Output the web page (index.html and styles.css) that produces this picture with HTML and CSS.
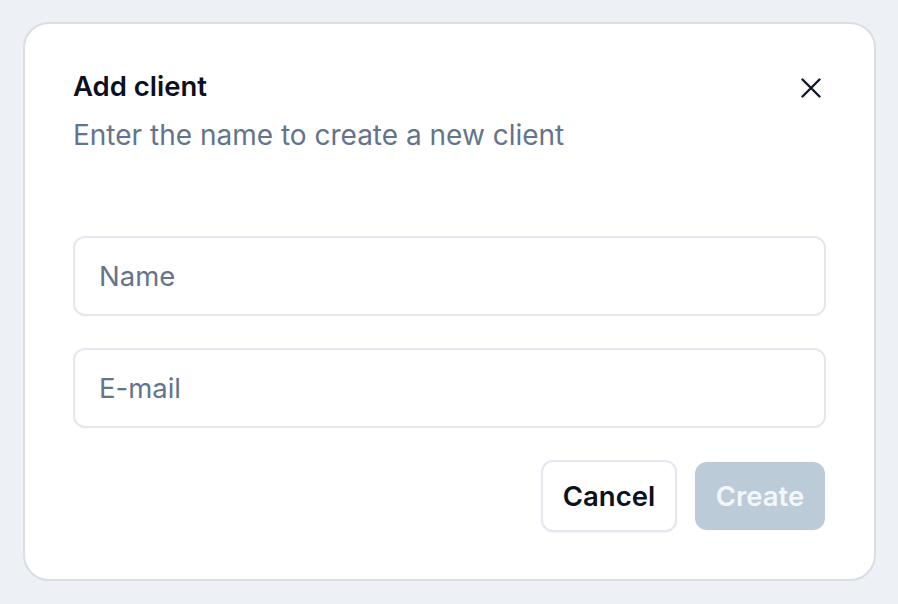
FILE: index.html
```html
<!DOCTYPE html>
<html>
<head>
<meta charset="utf-8">
<link rel="stylesheet" href="styles.css">
</head>
<body>
<div class="dialog">
  <div class="header">
    <div class="titles">
      <h2 class="title">Add client</h2>
      <p class="subtitle">Enter the name to create a new client</p>
    </div>
    <button class="close" aria-label="Close">
      <svg width="20" height="20" viewBox="0 0 20 20" fill="none" stroke="#0f172a" stroke-width="2.4" stroke-linecap="round"><path d="M1.5 1.5L18.5 18.5M18.5 1.5L1.5 18.5"/></svg>
    </button>
  </div>
  <div class="fields">
    <input class="field" type="text" placeholder="Name">
    <input class="field" type="text" placeholder="E-mail">
  </div>
  <div class="actions">
    <button class="btn btn-cancel">Cancel</button>
    <button class="btn btn-create" disabled>Create</button>
  </div>
</div>
</body>
</html>
```
FILE: styles.css
```css
* { box-sizing: border-box; }
html, body { margin: 0; padding: 0; }
body {
  background: #edf0f5;
  font-family: Inter, "Noto Sans", sans-serif;
  width: 898px;
  height: 604px;
  padding: 22px 22px 0 23px;
}
.dialog {
  width: 853px;
  height: 559px;
  background: #fff;
  border: 2px solid #d9dde4;
  border-radius: 26px;
  padding: 46px 48px 48px 48px;
  display: flex;
  flex-direction: column;
}
.header {
  display: flex;
  justify-content: space-between;
  align-items: flex-start;
}
.title {
  margin: 0;
  font-size: 27.5px;
  line-height: 32px;
  font-weight: 560;
  color: #0b1120;
}
.subtitle {
  margin: 17px 0 0;
  font-size: 28px;
  line-height: 32px;
  color: #64748b;
}
.close {
  background: none;
  border: 0;
  padding: 0;
  margin: 8px 5px 0 0;
  width: 20px;
  height: 20px;
  display: flex;
}
.fields {
  margin-top: 85px;
  display: flex;
  flex-direction: column;
  gap: 32px;
}
.field {
  height: 80px;
  border: 2px solid #e3e8ef;
  border-radius: 12px;
  padding: 0 24px;
  font-family: inherit;
  font-size: 27.5px;
  color: #0f172a;
  outline: none;
}
.field::placeholder { color: #64748b; }
.actions {
  margin-top: 32px;
  display: flex;
  justify-content: flex-end;
  align-items: center;
  gap: 18px;
}
.btn {
  font-family: inherit;
  font-size: 27.5px;
  font-weight: 560;
  border-radius: 12px;
}
.btn-cancel {
  width: 136px;
  height: 72px;
  background: #fff;
  color: #0b1120;
  border: 2px solid #e3e8ef;
  box-shadow: 0 1px 2px rgba(0,0,0,0.05);
}
.btn-create {
  width: 130px;
  height: 68px;
  background: #bccbd8;
  color: #f4f7fa;
  border: 0;
  margin-right: 1px;
}
```
